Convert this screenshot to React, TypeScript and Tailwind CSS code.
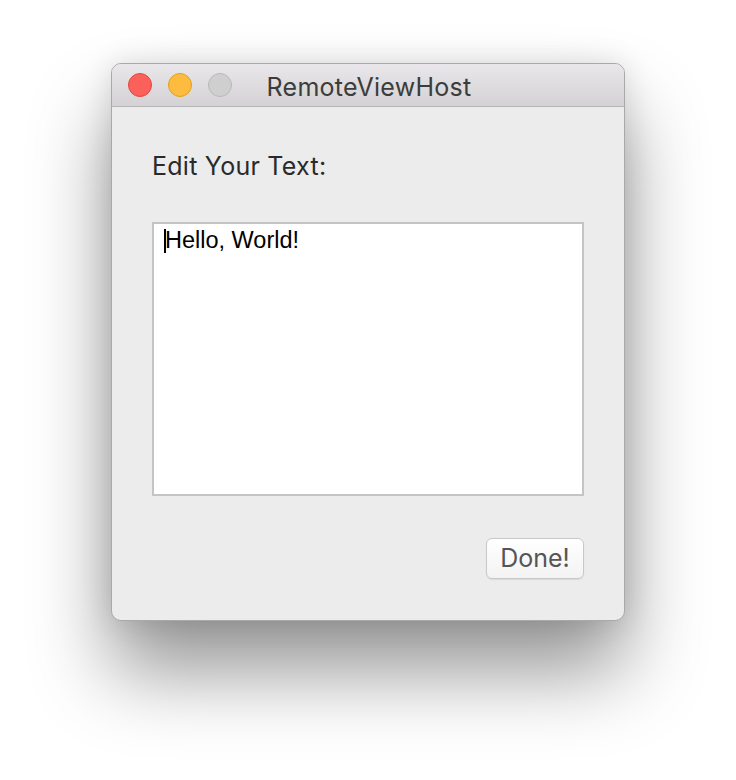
export default function App() {
  return (
    <div className="w-[736px] h-[780px] bg-white pt-[63px] pl-[111px]">
      <div
        className="w-[514px] h-[558px] rounded-[10px] border border-[#a9a9a9] bg-[#ececec] overflow-hidden flex flex-col shadow-[0_50px_80px_rgba(0,0,0,0.42),0_0_30px_rgba(0,0,0,0.12)]"
        style={{ fontFamily: "Inter, 'Open Sans', sans-serif" }}
      >
        {/* title bar */}
        <div className="relative h-[43px] shrink-0 bg-gradient-to-b from-[#e9e7e9] to-[#d4d2d4] border-b border-[#b5b5b5] flex items-center pl-[16px] gap-[16px]">
          <span className="w-[24px] h-[24px] rounded-full bg-[#fc605b] border border-[#e2463f]" />
          <span className="w-[24px] h-[24px] rounded-full bg-[#fdbc40] border border-[#e1a116]" />
          <span className="w-[24px] h-[24px] rounded-full bg-[#d0cfd0] border border-[#b9b8b9]" />
          <div className="absolute inset-0 flex items-center justify-center pl-[2px] pt-[6px] text-[25px] tracking-[0.01em] text-[#3c3c3c] pointer-events-none">
            RemoteViewHost
          </div>
        </div>

        {/* content */}
        <div className="flex-1 flex flex-col px-[40px] pt-[44px]">
          <div className="text-[25px] leading-[30px] tracking-[0.01em] text-[#2a2a2a]">Edit Your Text:</div>
          <div
            className="mt-[41px] h-[274px] border-2 border-[#c4c4c4] bg-white pl-[10px] pt-[2px] flex items-start"
            style={{ fontFamily: "'Liberation Sans', Arial, sans-serif" }}
          >
            <span className="w-[2px] h-[24px] bg-black mt-[3px] -mr-[1px]" />
            <span className="text-[23.5px] leading-[28px] text-black">Hello, World!</span>
          </div>
          <div className="flex justify-end mt-[42px]">
            <button className="h-[41px] w-[98px] rounded-[6px] border border-[#c8c8c8] bg-gradient-to-b from-white to-[#f3f3f3] text-[25px] text-[#555] shadow-[0_1px_1px_rgba(0,0,0,0.08)]">
              Done!
            </button>
          </div>
        </div>
      </div>
    </div>
  );
}
